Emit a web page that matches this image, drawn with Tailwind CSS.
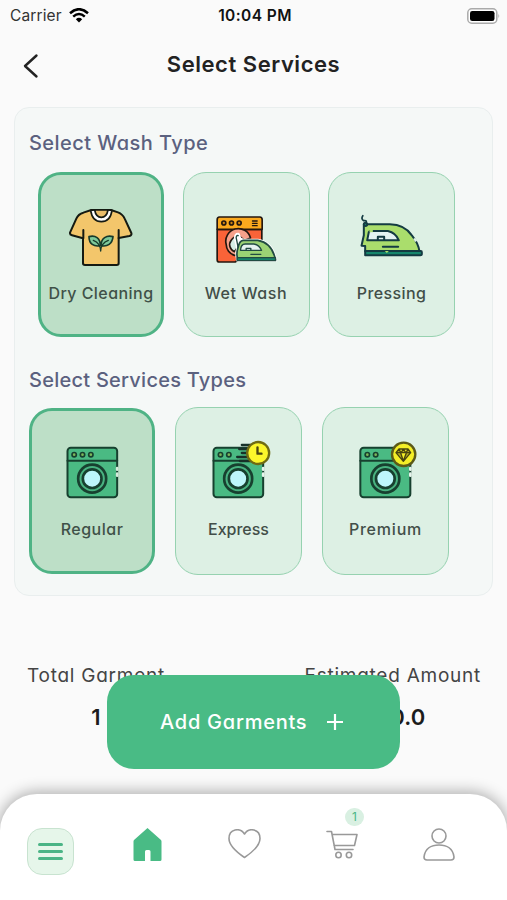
<!DOCTYPE html>
<html lang="en">
<head>
<meta charset="utf-8">
<title>Select Services</title>
<script src="https://cdn.jsdelivr.net/npm/@tailwindcss/browser@4"></script>
</head>
<body class="bg-[#fafafa]">
<div class="relative flex h-[900px] w-[507px] flex-col overflow-hidden bg-[#fafafa] font-['Inter',sans-serif] text-[#222] [font-feature-settings:'cv11']">

  <!-- status bar -->
  <div class="grid h-[31px] shrink-0 grid-cols-3 items-center pr-[7px] pl-[10px] [font-feature-settings:normal]">
    <div class="flex items-center gap-[7px]">
      <span class="text-[15.5px] tracking-[0.12px] text-[#333]">Carrier</span>
      <svg class="h-[15px] w-[20px]" viewBox="0 0 20 15" fill="none" stroke="#000" stroke-width="2.5"><path d="M1 5.2Q10-2.8 19 5.2"/><path d="M4.2 8.6Q10 3.4 15.8 8.6"/><path d="M6.8 11.2Q10 8.400 13.2 11.200L10 14.400Z" fill="#000" stroke="none"/></svg>
    </div>
    <span class="text-center text-[15.5px] font-semibold tracking-[0.4px] whitespace-nowrap text-[#111]">10:04 PM</span>
    <svg class="h-[16px] w-[33px] justify-self-end" viewBox="0 0 33 16"><rect x=".8" y=".8" width="29" height="14.400" rx="4" fill="#fff" stroke="#aaa" stroke-width="1.500"/><rect x="3" y="3" width="24.500" height="10" rx="2.300" fill="#000"/><path d="M31.500 5.500q1.500 2.500 0 5z" fill="#999"/></svg>
  </div>

  <!-- title bar -->
  <div class="grid h-[76px] shrink-0 grid-cols-[60px_1fr_60px] items-start">
    <svg class="mt-[22px] ml-[22px] h-[26px] w-[18px]" viewBox="0 0 18 26" fill="none" stroke="#222" stroke-width="2.400" stroke-linecap="round" stroke-linejoin="round"><path d="M14.500 2.500L3 13L14.500 23.500"/></svg>
    <h1 class="mt-[17px] text-center text-[22px] leading-[32px] font-semibold tracking-[0.55px]">Select Services</h1>
  </div>

  <!-- services panel -->
  <div class="mx-[14px] flex h-[489px] shrink-0 flex-col rounded-[15px] border border-[#e9eeee] bg-[#f5f8f7] pl-[14px]">
    <h2 class="mt-[20px] text-[20px] leading-[30px] font-medium tracking-[0.45px] text-[#5b617f]">Select Wash Type</h2>
    <div class="mt-[14px] ml-[9px] flex gap-[18.5px]">
      <div class="flex h-[165px] w-[126px] flex-col items-center rounded-[23px] border-3 border-[#4fb385] bg-[#bddfc7] pt-[25px]">
        <svg class="h-[75px] w-[80px] shrink-0" viewBox="3 0 240 225" stroke="#151a12" stroke-width="6" stroke-linejoin="round" stroke-linecap="round">
          <path d="M94 30L70 38Q55 42 49 56L30 98Q29 104 36 106L69 115V190Q69 195 75 195H170Q176 195 176 190V114L208 108Q216 106 214 99L194 56Q188 42 174 37L153 30Z" fill="#f3c66b"/>
          <path d="M70 90V115M176 90V115" fill="none"/>
          <path d="M92 31Q97 65 124 65Q151 65 156 31L144 30H104Z" fill="#fff" stroke-width="5"/>
          <path d="M104 30Q108 52 124 52Q140 52 144 30Z" fill="#e9bd69" stroke-width="5"/>
          <path d="M121 137C102 141 87 132 87 110C106 105 121 114 121 137ZM123 137C142 141 157 132 159 110C140 105 123 114 123 137Z" fill="#7dc99a" stroke="#173a2b" stroke-width="5"/>
          <path d="M100 121Q121 129 122 153Q123 129 145 121" fill="none" stroke="#173a2b" stroke-width="4"/>
        </svg>
        <span class="mt-[6px] text-[16px] leading-6 font-medium tracking-[0.45px] whitespace-nowrap text-[#3f5148]">Dry Cleaning</span>
      </div>
      <div class="flex h-[165px] w-[127px] flex-col items-center rounded-[23px] border border-[#96d2b0] bg-[#ddf0e4] pt-[27px]">
        <svg class="h-[75px] w-[80px] shrink-0" viewBox="4.500 -15 240 225" stroke="#24170f" stroke-width="5" stroke-linejoin="round" stroke-linecap="round">
          <path d="M38 73V164Q38 171 45 171H92L172 120V73Z" fill="#fa6338"/>
          <path d="M38 73V44Q38 36 45 36H166Q173 36 173 44V73Z" fill="#fba91d"/>
          <g fill="#cf8513"><circle cx="58" cy="54" r="6"/><circle cx="81" cy="54" r="6"/><circle cx="104" cy="54" r="6"/></g>
          <path d="M144 48H158M144 55H158M144 62H158" stroke-width="4"/>
          <path d="M90 151A35 35 0 0 1 65 118A35 35 0 0 1 138 99L120 106L94 150Z" fill="#f7a18a"/>
          <path d="M90 140A22 22 0 0 1 80 106Q88 92 106 95L118 105L98 129Z" fill="#d6eee6"/>
          <path d="M99 160Q95 145 100 130L93 100Q93 88 101 88L106 102Q112 106 118 106H160Q203 113 213 165H99Z" fill="#fff" stroke="#fff" stroke-width="10"/>
          <path d="M101 128L95 98Q96 90 101 92" fill="none" stroke="#214b42" stroke-width="4"/>
          <path d="M99 160Q95 145 100 130Q104 107 116 106H160Q203 113 213 165H99Z" fill="#9bd374" stroke="#214b42"/>
          <path d="M98 158H213V167H98Z" fill="#17836a" stroke="#214b42" stroke-width="4"/>
          <path d="M108 136Q109 117 122 117H148Q165 120 171 136Z" fill="#e5f4ef" stroke="#214b42" stroke-width="4"/>
          <path d="M125 136V130H139V136M139 148H169" fill="none" stroke="#214b42" stroke-width="4"/>
        </svg>
        <span class="mt-[5.500px] text-[16px] leading-6 font-medium tracking-[0.6px] whitespace-nowrap text-[#424e48]">Wet Wash</span>
      </div>
      <div class="flex h-[165px] w-[127px] flex-col items-center rounded-[23px] border border-[#96d2b0] bg-[#ddf0e4] pt-[27px]">
        <svg class="h-[75px] w-[85px] shrink-0" viewBox="-0.500 -15 255 225" stroke="#143b42" stroke-width="6" stroke-linejoin="round" stroke-linecap="round">
          <path d="M49 58Q57 45 43 47Q35 41 41 32" fill="none" stroke-width="5"/>
          <path d="M44 58H122Q166 59 188 91Q207 114 211 139H48V123L37 122L44 91Z" fill="#aadd6c"/>
          <path d="M195 100L201 109" stroke="#ddf0e4" stroke-width="7" stroke-linecap="butt"/>
          <path d="M48 138H215Q218 138 218 142V147Q218 151 214 151H48Z" fill="#16866c"/>
          <path d="M107 138H119L113 144Z" fill="#aadd6c" stroke="none"/>
          <path d="M54 106L59 81Q60 78 65 78H116Q140 83 149 106Z" fill="#e4f3f1"/>
          <path d="M61 78H71" stroke="#aadd6c" stroke-width="7" stroke-linecap="butt"/>
          <path d="M86 105V95H105V105M101 125H147" fill="none"/>
          <circle cx="49" cy="58" r="5" fill="#16866c"/>
        </svg>
        <span class="mt-[5.500px] text-[16px] leading-6 font-medium tracking-[0.4px] whitespace-nowrap text-[#424e48]">Pressing</span>
      </div>
    </div>

    <h2 class="mt-[28px] text-[20px] leading-[30px] font-medium tracking-[0.25px] text-[#5b617f]">Select Services Types</h2>
    <div class="mt-[13px] flex gap-[20px]">
      <div class="flex h-[166px] w-[126px] flex-col items-center rounded-[23px] border-3 border-[#4fb385] bg-[#bddfc7] pt-[24px]">
        <svg class="h-[75px] w-[75px] shrink-0" viewBox="-1.500 0 225 225" stroke="#17402f" stroke-width="6" stroke-linejoin="round" stroke-linecap="round">
          <rect x="36" y="38" width="149" height="149" rx="10" fill="#4aba83"/>
          <path d="M36 77H185"/>
          <g fill="#7db75a" stroke-width="5"><circle cx="56" cy="59" r="6.500"/><circle cx="81" cy="59" r="6.500"/><circle cx="106" cy="59" r="6.500"/></g>
          <circle cx="110" cy="131" r="42" fill="#49b381" stroke-width="8"/><circle cx="110" cy="131" r="28" fill="#bdf6fb" stroke-width="8"/>
          <path d="M185 99V104M185 116V122" stroke="#d5eadb" stroke-width="8"/>
        </svg>
        <span class="mt-[7px] text-[16px] leading-6 font-medium tracking-[0.5px] whitespace-nowrap text-[#3f5148]">Regular</span>
      </div>
      <div class="flex h-[168px] w-[127px] -translate-y-px flex-col items-center rounded-[23px] border border-[#96d2b0] bg-[#ddf0e4] pt-[27px]">
        <svg class="h-[75px] w-[75px] shrink-0" viewBox="-10.500 0 225 225" stroke="#17402f" stroke-width="6" stroke-linejoin="round" stroke-linecap="round">
          <rect x="27" y="38" width="149" height="149" rx="10" fill="#4aba83"/>
          <path d="M27 77H176"/>
          <g fill="#7db75a" stroke-width="5"><circle cx="48" cy="59" r="6.500"/><circle cx="73" cy="59" r="6.500"/></g>
          <circle cx="101" cy="131" r="42" fill="#49b381" stroke-width="8"/><circle cx="101" cy="131" r="28" fill="#bdf6fb" stroke-width="8"/>
          <path d="M176 99V104M176 116V122" stroke="#e8f5ec" stroke-width="8"/>
          <path d="M112 30H145M104 42H140M112 54H136M98 66H140M106 78H145" stroke="#173129" stroke-width="7"/>
          <circle cx="161" cy="54" r="33" fill="#fbf62b" stroke="#6f6b13" stroke-width="7"/>
          <path d="M159 37V56H171" fill="none" stroke="#494512" stroke-width="7"/>
        </svg>
        <span class="mt-[7px] text-[16px] leading-6 font-medium whitespace-nowrap text-[#424e48]">Express</span>
      </div>
      <div class="flex h-[168px] w-[127px] -translate-y-px flex-col items-center rounded-[23px] border border-[#96d2b0] bg-[#ddf0e4] pt-[27px]">
        <svg class="h-[75px] w-[75px] shrink-0" viewBox="-6 0 225 225" stroke="#17402f" stroke-width="6" stroke-linejoin="round" stroke-linecap="round">
          <rect x="31" y="38" width="150" height="149" rx="10" fill="#4aba83"/>
          <path d="M31 77H181"/>
          <g fill="#7db75a" stroke-width="5"><circle cx="52" cy="59" r="6.500"/><circle cx="77" cy="59" r="6.500"/></g>
          <circle cx="106" cy="131" r="42" fill="#49b381" stroke-width="8"/><circle cx="106" cy="131" r="28" fill="#bdf6fb" stroke-width="8"/>
          <path d="M181 99V104M181 116V122" stroke="#e8f5ec" stroke-width="8"/>
          <circle cx="161" cy="58" r="35" fill="#f4ee27" stroke="#5c5a18" stroke-width="7"/>
          <path d="M147 42H174L182 53L160 79L138 53ZM138 53H182M147 42L153 54L160 42L168 54L174 42M152 54L160 78L169 54" fill="#b5ad20" stroke="#47430f" stroke-width="4"/>
        </svg>
        <span class="mt-[7px] text-[16px] leading-6 font-medium tracking-[0.8px] whitespace-nowrap text-[#424e48]">Premium</span>
      </div>
    </div>
  </div>

  <!-- totals -->
  <div class="mt-[65px] flex shrink-0 justify-between pr-[26px] pl-[27px]">
    <div class="flex flex-col items-center">
      <span class="text-[19px] leading-[30px] tracking-[0.75px] whitespace-nowrap text-[#444]">Total Garment</span>
      <span class="mt-[11px] text-[22px] leading-[30px] font-semibold text-[#1c1c1c]">1</span>
    </div>
    <div class="flex flex-col items-center">
      <span class="text-[19px] leading-[30px] tracking-[0.75px] whitespace-nowrap text-[#444]">Estimated Amount</span>
      <span class="mt-[11px] pl-[30px] text-[22px] leading-[30px] font-semibold text-[#1c1c1c]">0.0</span>
    </div>
  </div>

  <!-- floating action -->
  <button class="absolute top-[675px] left-[107px] flex h-[94px] w-[293px] items-center rounded-[27px] bg-[#49bb85] pl-[53px] text-white">
    <span class="w-[167px] text-left text-[20px] font-medium tracking-[0.75px] whitespace-nowrap">Add Garments</span>
    <svg class="h-[16px] w-[16px]" viewBox="0 0 16 16" stroke="#fff" stroke-width="2.200"><path d="M8 0V16M0 8H16"/></svg>
  </button>

  <!-- bottom navigation -->
  <nav class="absolute inset-x-0 top-[794px] flex h-[106px] rounded-t-[37px] bg-white shadow-[0_-1px_15px_1px_rgba(0,0,0,0.32)]">
    <div class="flex w-[101px] justify-center pt-[34px]">
      <div class="flex h-[47px] w-[47px] flex-col items-center justify-center gap-[4px] rounded-[15px] border border-[#c8e3d0] bg-[#e6f6ea]">
        <i class="h-[2.700px] w-[25px] rounded bg-[#4bb486]"></i><i class="h-[2.700px] w-[25px] rounded bg-[#4bb486]"></i><i class="h-[2.700px] w-[25px] rounded bg-[#4bb486]"></i>
      </div>
    </div>
    <div class="flex w-[93px] justify-center pt-[34px]">
      <svg class="h-[33px] w-[29px]" viewBox="0 0 29 33" fill="#49bb85"><path d="M14.500 0L28 12Q28.500 12.500 28.500 13.500V31.500Q28.500 33 27 33H17.500V23.500Q17.500 22 16 22H13.500Q12 22 12 23.500V33H2Q.5 33 .5 31.500V13.500Q.5 12.500 1 12Z"/></svg>
    </div>
    <div class="flex w-[101px] justify-center pt-[35px]">
      <svg class="h-[30px] w-[33px]" viewBox="0 0 33 30" fill="none" stroke="#999" stroke-width="1.600" stroke-linejoin="round"><path d="M16.500 28.500Q1 18 1 9.500C1 0 12-2 16.500 5C21-2 32 0 32 9.500Q32 18 16.500 28.500Z"/></svg>
    </div>
    <div class="relative flex w-[94px] justify-center pt-[36px]">
      <svg class="h-[29px] w-[32px]" viewBox="0 0 32 29" fill="none" stroke="#999" stroke-width="1.600" stroke-linejoin="round" stroke-linecap="round"><path d="M1 1.500H5.500L9 19.500H27M6 4.500H31L28.500 15.500H8"/><circle cx="12.500" cy="25" r="2.700"/><circle cx="23" cy="25" r="2.700"/></svg>
      <span class="absolute top-[14px] left-[50px] flex h-[18px] w-[19px] items-center justify-center rounded-full bg-[#d9f0e2] text-[12px] text-[#49b584]">1</span>
    </div>
    <div class="flex w-[100px] justify-center pt-[34px]">
      <svg class="h-[34px] w-[32px]" viewBox="0 0 32 34" fill="none" stroke="#999" stroke-width="1.600"><circle cx="16" cy="8" r="7"/><path d="M4 32H28Q31 32 31 29C30 21 24 17 16 17S2 21 1 29Q1 32 4 32Z"/></svg>
    </div>
  </nav>
</div>
</body>
</html>
